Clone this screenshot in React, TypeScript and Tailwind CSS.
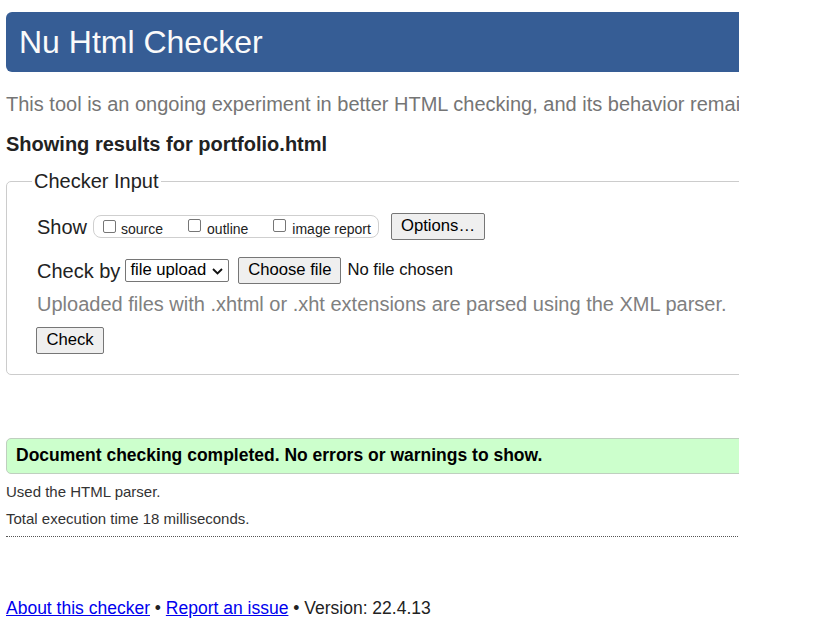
import React from "react";

function Checkbox() {
  return (
    <span className="inline-block w-[13px] h-[13px] rounded-[2px] border border-[#767676] bg-white shrink-0" />
  );
}

function Btn({ children, className = "" }: { children: React.ReactNode; className?: string }) {
  return (
    <span
      className={
        "inline-flex items-center justify-center h-[27px] rounded-[2px] border border-[#767676] bg-[#efefef] text-[16.67px] leading-none text-black " +
        className
      }
    >
      {children}
    </span>
  );
}

export default function App() {
  return (
    <div
      className="w-[821px] h-[630px] bg-white overflow-hidden"
      style={{ fontFamily: '"Liberation Sans", Arial, sans-serif' }}
    >
      <div className="w-[739px] overflow-hidden">
        <div className="w-[1000px] ml-[6px]">
          {/* Header */}
          <div className="mt-[12px] h-[60px] rounded-l-[6px] bg-[#365d95] flex items-center pl-[13px]">
            <h1 className="text-[32px] leading-none text-[#fafafa] font-normal">Nu Html Checker</h1>
          </div>

          {/* Intro */}
          <p className="mt-[20px] text-[20px] leading-[24px] text-[#757575] whitespace-nowrap">
            This tool is an ongoing experiment in better HTML checking, and its behavior remains subject to change
          </p>

          <p className="mt-[16px] text-[20px] leading-[24px] font-bold text-[#222]">
            Showing results for portfolio.html
          </p>

          {/* Fieldset */}
          <fieldset className="mt-[13px] border border-[#cccccc] rounded-[5px] pb-[20px]">
            <legend className="ml-[25px] px-[2px] text-[20px] leading-[24px] text-[#222]">Checker Input</legend>

            <div className="pl-[30px]">
              <div className="mt-[20px] flex items-center h-[27px]">
                <span className="text-[20px] leading-[24px] text-[#222]">Show</span>
                <div className="ml-[6px] h-[23px] w-[286px] rounded-[8px] border border-[#cfcfcf] flex items-center pl-[9px]">
                  <Checkbox />
                  <span className="ml-[5px] text-[14px] leading-none text-[#222] mt-[4px]">source</span>
                  <span className="ml-[25px]">
                    <Checkbox />
                  </span>
                  <span className="ml-[6px] text-[14px] leading-none text-[#222] mt-[4px]">outline</span>
                  <span className="ml-[25px]">
                    <Checkbox />
                  </span>
                  <span className="ml-[6px] text-[14px] leading-none text-[#222] mt-[4px]">image report</span>
                </div>
                <Btn className="ml-[12px] w-[94px]">Options…</Btn>
              </div>

              <div className="mt-[17px] flex items-center h-[27px]">
                <span className="text-[20px] leading-[24px] text-[#222]">Check by</span>
                <span className="ml-[5px] h-[23px] w-[104px] rounded-[2px] border border-[#767676] bg-white flex items-center pl-[4px] pr-[5px] justify-between text-[16.67px] leading-none text-black">
                  <span>file upload</span>
                  <svg width="11" height="7" viewBox="0 0 11 7" className="mt-[1px]">
                    <path d="M1 1 L5.5 5.5 L10 1" stroke="#111" strokeWidth="1.8" fill="none" />
                  </svg>
                </span>
                <Btn className="ml-[9px] w-[103px]">Choose file</Btn>
                <span className="ml-[6px] text-[16.67px] leading-none text-[#111]">No file chosen</span>
              </div>

              <p className="mt-[8px] text-[20px] leading-[24px] text-[#808080]">
                Uploaded files with .xhtml or .xht extensions are parsed using the XML parser.
              </p>

              <div className="mt-[11px]">
                <Btn className="w-[68px] -ml-[1px]">Check</Btn>
              </div>
            </div>
          </fieldset>

          {/* Success */}
          <div className="mt-[63px] h-[36px] rounded-l-[5px] border border-[#bfcfbf] bg-[#ccffcc] flex items-center pl-[9px]">
            <span className="text-[17.5px] leading-none font-bold text-black">
              Document checking completed. No errors or warnings to show.
            </span>
          </div>

          <p className="mt-[9px] text-[15px] leading-[18px] text-[#333]">Used the HTML parser.</p>
          <p className="mt-[9px] text-[15px] leading-[18px] text-[#333]">Total execution time 18 milliseconds.</p>
          <div className="mt-[8px] border-t border-dotted border-[#555]" />

          <p className="mt-[61px] text-[17.5px] leading-[21px] text-[#222]">
            <a className="text-[#0000ee] underline">About this checker</a> •{" "}
            <a className="text-[#0000ee] underline">Report an issue</a> • Version: 22.4.13
          </p>
        </div>
      </div>
    </div>
  );
}
